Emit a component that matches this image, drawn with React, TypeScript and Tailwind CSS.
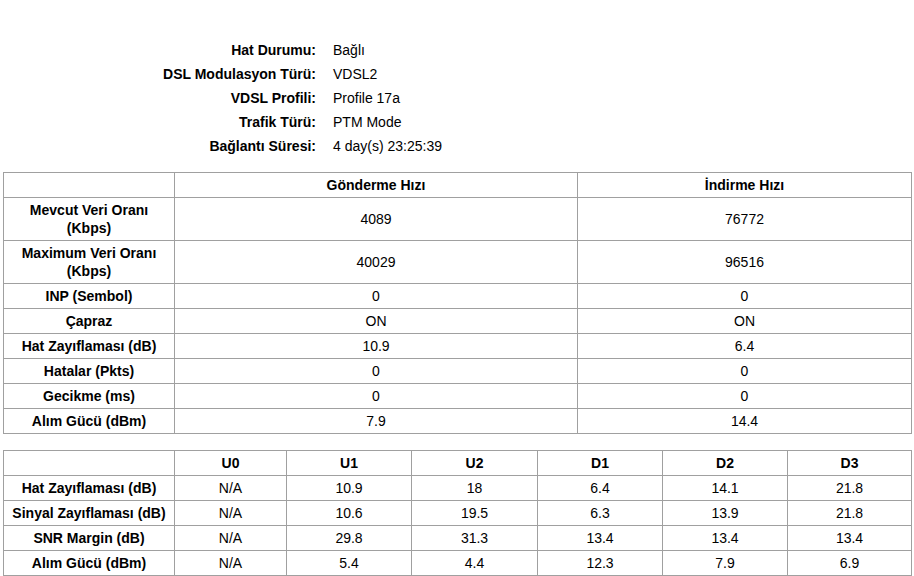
const info: [string, string][] = [
  ["Hat Durumu:", "Bağlı"],
  ["DSL Modulasyon Türü:", "VDSL2"],
  ["VDSL Profili:", "Profile 17a"],
  ["Trafik Türü:", "PTM Mode"],
  ["Bağlantı Süresi:", "4 day(s) 23:25:39"],
];

const rates: [string, string, string][] = [
  ["Mevcut Veri Oranı (Kbps)", "4089", "76772"],
  ["Maximum Veri Oranı (Kbps)", "40029", "96516"],
  ["INP (Sembol)", "0", "0"],
  ["Çapraz", "ON", "ON"],
  ["Hat Zayıflaması (dB)", "10.9", "6.4"],
  ["Hatalar (Pkts)", "0", "0"],
  ["Gecikme (ms)", "0", "0"],
  ["Alım Gücü (dBm)", "7.9", "14.4"],
];

const bands = ["U0", "U1", "U2", "D1", "D2", "D3"];
const bandRows: [string, string[]][] = [
  ["Hat Zayıflaması (dB)", ["N/A", "10.9", "18", "6.4", "14.1", "21.8"]],
  ["Sinyal Zayıflaması (dB)", ["N/A", "10.6", "19.5", "6.3", "13.9", "21.8"]],
  ["SNR Margin (dB)", ["N/A", "29.8", "31.3", "13.4", "13.4", "13.4"]],
  ["Alım Gücü (dBm)", ["N/A", "5.4", "4.4", "12.3", "7.9", "6.9"]],
];

const td = "border border-[#a0a0a0] px-1 py-[3px] text-center align-middle";

export default function App() {
  return (
    <div className="min-h-[576px] bg-white text-[14px] leading-[18px] text-black" style={{ fontFamily: '"Liberation Sans", Arial, sans-serif' }}>
      <div className="pt-[38px] grid grid-cols-[316px_1fr]">
        {info.map(([k, v]) => (
          <div key={k} className="contents">
            <div className="text-right font-bold leading-[24px]">{k}</div>
            <div className="pl-[17px] leading-[24px]">{v}</div>
          </div>
        ))}
      </div>

      <table className="mt-[14px] ml-[3px] w-[908px] table-fixed border-collapse">
        <colgroup>
          <col className="w-[171px]" />
          <col className="w-[403px]" />
          <col className="w-[334px]" />
        </colgroup>
        <tbody>
          <tr>
            <td className={td}></td>
            <td className={td + " font-bold"}>Gönderme Hızı</td>
            <td className={td + " font-bold"}>İndirme Hızı</td>
          </tr>
          {rates.map(([k, a, b]) => (
            <tr key={k}>
              <td className={td + " font-bold"}>{k}</td>
              <td className={td}>{a}</td>
              <td className={td}>{b}</td>
            </tr>
          ))}
        </tbody>
      </table>

      <table className="mt-[16px] ml-[3px] w-[908px] table-fixed border-collapse">
        <colgroup>
          <col className="w-[171px]" />
          <col className="w-[112px]" />
          <col className="w-[125px]" />
          <col className="w-[126px]" />
          <col className="w-[125px]" />
          <col className="w-[125px]" />
          <col className="w-[124px]" />
        </colgroup>
        <tbody>
          <tr>
            <td className={td}></td>
            {bands.map((b) => (
              <td key={b} className={td + " font-bold"}>{b}</td>
            ))}
          </tr>
          {bandRows.map(([k, vals]) => (
            <tr key={k}>
              <td className={td + " font-bold whitespace-nowrap"}>{k}</td>
              {vals.map((v, i) => (
                <td key={i} className={td}>{v}</td>
              ))}
            </tr>
          ))}
        </tbody>
      </table>
    </div>
  );
}
